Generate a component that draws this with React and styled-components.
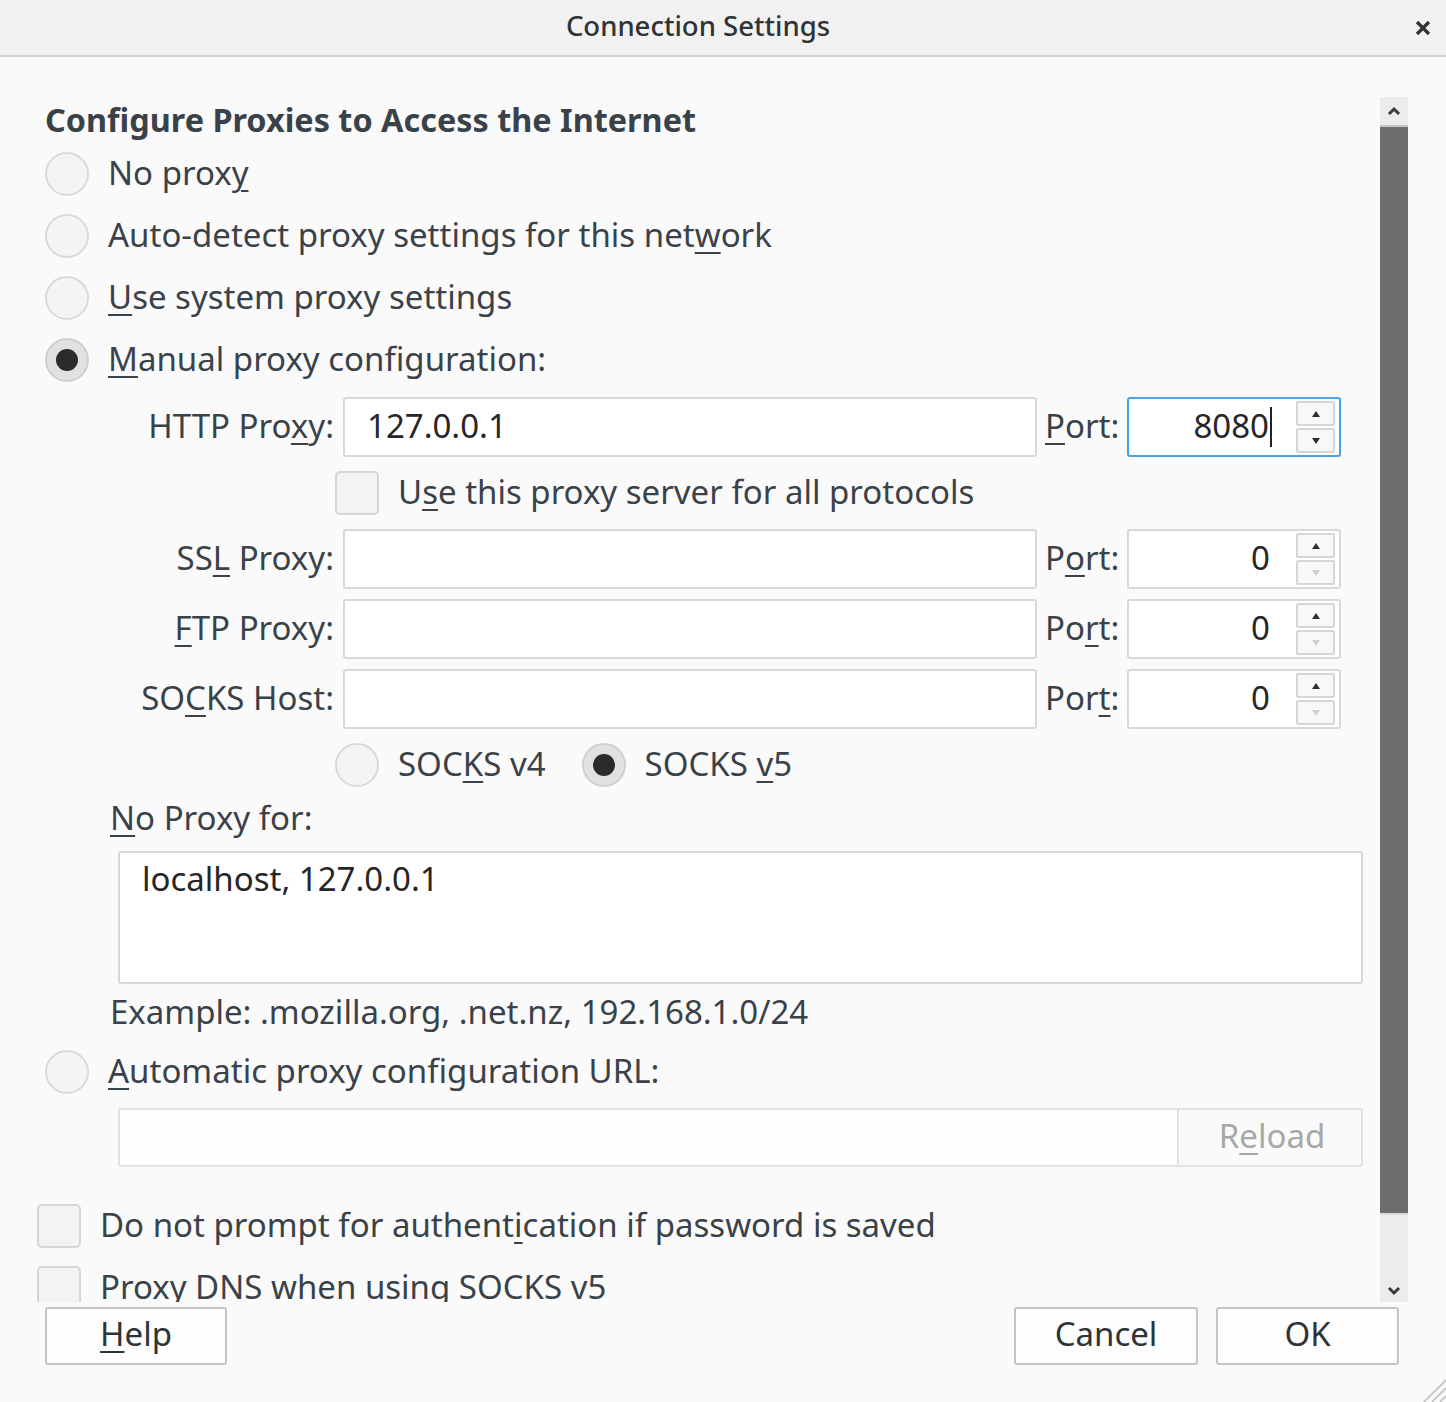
import React from "react";
import styled, { createGlobalStyle } from "styled-components";

const GlobalStyle = createGlobalStyle`
  html, body {
    margin: 0;
    padding: 0;
    background: #fafafa;
  }
  * {
    box-sizing: border-box;
  }
`;

const TEXT = "#3a4249";
const SIZE = 33;

const Window = styled.div`
  position: relative;
  width: 1446px;
  height: 1402px;
  display: flex;
  flex-direction: column;
  background: #fafafa;
  font-family: "Noto Sans", "Open Sans", sans-serif;
  color: ${TEXT};
  overflow: hidden;
`;

const TitleBar = styled.div`
  height: 57px;
  flex-shrink: 0;
  display: flex;
  align-items: center;
  justify-content: center;
  position: relative;
  padding-right: 50px;
  background: #f1f1f1;
  border-bottom: 2px solid #d2d2d2;
`;

const Title = styled.div`
  font-size: 27.5px;
  font-weight: 500;
  color: #2e3436;
  padding-bottom: 4px;
`;

const CloseButton = styled.div`
  position: absolute;
  right: 14px;
  top: 19px;
  width: 18px;
  height: 18px;
  display: flex;
`;

const ScrollFrame = styled.div`
  margin-top: 40px;
  height: 1205px;
  flex-shrink: 0;
  display: flex;
`;

const Content = styled.div`
  width: 1380px;
  height: 100%;
  overflow: hidden;
  display: flex;
  flex-direction: column;
`;

const Scrollbar = styled.div`
  width: 28px;
  height: 100%;
  display: flex;
  flex-direction: column;
  background: #ececec;
`;

const ScrollArrow = styled.div`
  height: 28px;
  flex-shrink: 0;
  display: flex;
  align-items: center;
  justify-content: center;
`;

const ScrollThumb = styled.div`
  height: 1090px;
  flex-shrink: 0;
  background: #6e6e6e;
  border-top: 2px solid #c4c4c4;
  border-bottom: 2px solid #dadada;
`;

const ScrollRest = styled.div`
  flex: 1;
  display: flex;
  align-items: flex-end;
  justify-content: center;
  padding-bottom: 6px;
`;

const Heading = styled.div`
  height: 46px;
  line-height: 44px;
  padding-left: 45px;
  font-size: 32.4px;
  font-weight: bold;
  color: ${TEXT};
  flex-shrink: 0;
`;

const Row = styled.div`
  display: flex;
  align-items: center;
  flex-shrink: 0;
  height: ${(p) => p.h || 62}px;
  margin-top: ${(p) => p.mt || 0}px;
  padding-left: ${(p) => p.indent || 0}px;
  gap: 19px;
`;

const Label = styled.span`
  font-size: ${SIZE}px;
  white-space: nowrap;
  padding-bottom: 3px;
  color: ${TEXT};
`;

const U = styled.span`
  text-decoration: underline;
  text-decoration-thickness: 2px;
  text-underline-offset: 5px;
`;

const Radio = styled.span`
  width: 44px;
  height: 44px;
  flex-shrink: 0;
  border-radius: 50%;
  border: 2px solid ${(p) => (p.checked ? "#cfcfcf" : "#dadada")};
  background: ${(p) => (p.checked ? "#e1e1e1" : "#f4f4f4")};
  display: flex;
  align-items: center;
  justify-content: center;
  margin-left: ${(p) => p.ml || 0}px;
  &::after {
    content: "";
    display: ${(p) => (p.checked ? "block" : "none")};
    width: 22px;
    height: 22px;
    border-radius: 50%;
    background: #2b2b2b;
  }
`;

const Checkbox = styled.span`
  width: 44px;
  height: 44px;
  flex-shrink: 0;
  border-radius: 5px;
  border: 2px solid #d6d6d6;
  background: #f3f3f3;
`;

const FieldRow = styled.div`
  display: flex;
  align-items: center;
  flex-shrink: 0;
  height: 60px;
  margin-top: ${(p) => p.mt || 0}px;
`;

const FieldLabel = styled.span`
  width: 343px;
  padding-right: 9px;
  padding-bottom: 3px;
  text-align: right;
  font-size: ${SIZE}px;
  white-space: nowrap;
  color: ${TEXT};
`;

const PortLabel = styled.span`
  width: 90px;
  padding-left: 8px;
  padding-bottom: 3px;
  font-size: ${SIZE}px;
  white-space: nowrap;
  color: ${TEXT};
`;

const TextBox = styled.div`
  width: ${(p) => p.w}px;
  height: ${(p) => p.h || 60}px;
  background: #ffffff;
  border: 2px solid #d8d8d8;
  border-radius: 3px;
  display: flex;
  align-items: ${(p) => (p.multi ? "flex-start" : "center")};
  padding-left: 22px;
  padding-bottom: ${(p) => (p.multi ? 0 : 3)}px;
  padding-top: ${(p) => (p.multi ? 3 : 0)}px;
  font-size: ${SIZE}px;
  color: #262626;
  flex-shrink: 0;
`;

const SpinBox = styled.div`
  width: 214px;
  height: 60px;
  background: #ffffff;
  border: 2px solid ${(p) => (p.focused ? "#4aa3e8" : "#d8d8d8")};
  border-radius: 3px;
  display: flex;
  align-items: center;
  padding-right: 4px;
  font-size: ${SIZE}px;
  color: #262626;
`;

const SpinValue = styled.div`
  flex: 1;
  display: flex;
  justify-content: flex-end;
  align-items: center;
  padding-bottom: 3px;
  padding-right: ${(p) => (p.focused ? 24 : 26)}px;
`;

const Caret = styled.span`
  width: 2px;
  height: 40px;
  margin-left: 1px;
  margin-top: 3px;
  background: #222;
`;

const SpinButtons = styled.div`
  width: 39px;
  display: flex;
  flex-direction: column;
  gap: 2px;
`;

const SpinButton = styled.div`
  height: 25px;
  border: 2px solid #d6d6d6;
  border-radius: 2px;
  background: #f8f8f8;
  display: flex;
  align-items: center;
  justify-content: center;
`;

const NoProxyBlock = styled.div`
  padding-left: 110px;
  flex-shrink: 0;
  display: flex;
  flex-direction: column;
`;

const Line = styled.div`
  height: 40px;
  line-height: 38px;
  margin-top: ${(p) => p.mt || 0}px;
  font-size: ${SIZE}px;
  color: ${TEXT};
  white-space: nowrap;
`;

const TextArea = styled(TextBox)`
  margin-left: 8px;
  margin-top: 12px;
`;

const UrlRow = styled.div`
  display: flex;
  flex-shrink: 0;
  height: 59px;
  margin-top: 5px;
  margin-left: 118px;
  width: 1245px;
  border: 2px solid #e2e2e2;
  border-radius: 3px;
  background: #fefefe;
`;

const UrlInput = styled.div`
  flex: 1;
`;

const ReloadButton = styled.div`
  width: 184px;
  border-left: 2px solid #e2e2e2;
  background: #fafafa;
  display: flex;
  align-items: center;
  justify-content: center;
  font-size: ${SIZE}px;
  color: #a8a8a8;
  padding-bottom: 4px;
  padding-left: 4px;
`;

const ButtonBar = styled.div`
  display: flex;
  align-items: center;
  margin-top: 5px;
  padding: 0 47px 0 45px;
  height: 58px;
  flex-shrink: 0;
`;

const Button = styled.div`
  width: ${(p) => p.w || 183}px;
  height: 58px;
  border: 2px solid #c4c4c4;
  border-radius: 3px;
  background: #fdfdfd;
  display: flex;
  align-items: center;
  justify-content: center;
  font-size: ${SIZE}px;
  color: #2e3436;
  padding-bottom: 5px;
  margin-left: ${(p) => p.ml || 0}px;
`;

const Spacer = styled.div`
  flex: 1;
`;

const Grip = styled.svg`
  position: absolute;
  right: 0;
  bottom: 0;
`;

const Arrow = ({ up, faded }) => (
  <svg width="10" height="8" viewBox="0 0 10 8">
    <polygon
      points={up ? "5,1 9,7 1,7" : "1,1 9,1 5,7"}
      fill={faded ? "#d0d0d0" : "#2e2e2e"}
    />
  </svg>
);

const Chevron = ({ up }) => (
  <svg width="14" height="10" viewBox="0 0 14 10">
    <polyline
      points={up ? "2,8 7,3 12,8" : "2,2 7,7 12,2"}
      fill="none"
      stroke="#3a3a3a"
      strokeWidth="3"
    />
  </svg>
);

const Spin = ({ value, focused }) => (
  <SpinBox focused={focused}>
    <SpinValue focused={focused}>
      {value}
      {focused && <Caret />}
    </SpinValue>
    <SpinButtons>
      <SpinButton>
        <Arrow up />
      </SpinButton>
      <SpinButton>
        <Arrow faded={value === "0"} />
      </SpinButton>
    </SpinButtons>
  </SpinBox>
);

const ProxyRow = ({ label, value, port, portLabel, focused, mt }) => (
  <FieldRow mt={mt}>
    <FieldLabel>{label}</FieldLabel>
    <TextBox w={694}>{value}</TextBox>
    <PortLabel>{portLabel}</PortLabel>
    <Spin value={port} focused={focused} />
  </FieldRow>
);

export default function App() {
  return (
    <>
      <GlobalStyle />
      <Window>
        <TitleBar>
          <Title>Connection Settings</Title>
          <CloseButton>
            <svg width="18" height="18" viewBox="0 0 18 18">
              <path d="M3 3 L15 15 M15 3 L3 15" stroke="#2e3436" strokeWidth="3.2" />
            </svg>
          </CloseButton>
        </TitleBar>

        <ScrollFrame>
          <Content>
            <Heading>Configure Proxies to Access the Internet</Heading>
            <Row indent={45}>
              <Radio />
              <Label>
                No prox<U>y</U>
              </Label>
            </Row>
            <Row indent={45}>
              <Radio />
              <Label>
                Auto-detect proxy settings for this net<U>w</U>ork
              </Label>
            </Row>
            <Row indent={45}>
              <Radio />
              <Label>
                <U>U</U>se system proxy settings
              </Label>
            </Row>
            <Row indent={45}>
              <Radio checked />
              <Label>
                <U>M</U>anual proxy configuration:
              </Label>
            </Row>

            <ProxyRow
              mt={6}
              label={
                <>
                  HTTP Pro<U>x</U>y:
                </>
              }
              value="127.0.0.1"
              portLabel={
                <>
                  <U>P</U>ort:
                </>
              }
              port="8080"
              focused
            />
            <Row indent={335} h={54} mt={9}>
              <Checkbox />
              <Label>
                U<U>s</U>e this proxy server for all protocols
              </Label>
            </Row>
            <ProxyRow
              mt={9}
              label={
                <>
                  SS<U>L</U> Proxy:
                </>
              }
              value=""
              portLabel={
                <>
                  P<U>o</U>rt:
                </>
              }
              port="0"
            />
            <ProxyRow
              mt={10}
              label={
                <>
                  <U>F</U>TP Proxy:
                </>
              }
              value=""
              portLabel={
                <>
                  Po<U>r</U>t:
                </>
              }
              port="0"
            />
            <ProxyRow
              mt={10}
              label={
                <>
                  SO<U>C</U>KS Host:
                </>
              }
              value=""
              portLabel={
                <>
                  Por<U>t</U>:
                </>
              }
              port="0"
            />
            <Row indent={335} h={54} mt={9}>
              <Radio />
              <Label>
                SOC<U>K</U>S v4
              </Label>
              <Radio checked ml={17} />
              <Label>
                SOCKS <U>v</U>5
              </Label>
            </Row>

            <NoProxyBlock>
              <Line mt={7}>
                <U>N</U>o Proxy for:
              </Line>
              <TextArea w={1245} h={133} multi>
                localhost, 127.0.0.1
              </TextArea>
              <Line mt={9}>Example: .mozilla.org, .net.nz, 192.168.1.0/24</Line>
            </NoProxyBlock>

            <Row indent={45} mt={8}>
              <Radio />
              <Label>
                <U>A</U>utomatic proxy configuration URL:
              </Label>
            </Row>
            <UrlRow>
              <UrlInput />
              <ReloadButton>
                R<U>e</U>load
              </ReloadButton>
            </UrlRow>

            <Row indent={37} mt={28}>
              <Checkbox />
              <Label>
                Do not prompt for authent<U>i</U>cation if password is saved
              </Label>
            </Row>
            <Row indent={37}>
              <Checkbox />
              <Label>Proxy DNS when using SOCKS v5</Label>
            </Row>
          </Content>
          <Scrollbar>
            <ScrollArrow>
              <Chevron up />
            </ScrollArrow>
            <ScrollThumb />
            <ScrollRest>
              <Chevron />
            </ScrollRest>
          </Scrollbar>
        </ScrollFrame>

        <ButtonBar>
          <Button w={182}>
            <span>
              <U>H</U>elp
            </span>
          </Button>
          <Spacer />
          <Button w={184}>Cancel</Button>
          <Button w={183} ml={18}>
            OK
          </Button>
        </ButtonBar>

        <Grip width="26" height="24" viewBox="0 0 26 24">
          <path d="M4 24 L26 2 M12 24 L26 10 M20 24 L26 18" stroke="#c8c8c8" strokeWidth="2" />
        </Grip>
      </Window>
    </>
  );
}
